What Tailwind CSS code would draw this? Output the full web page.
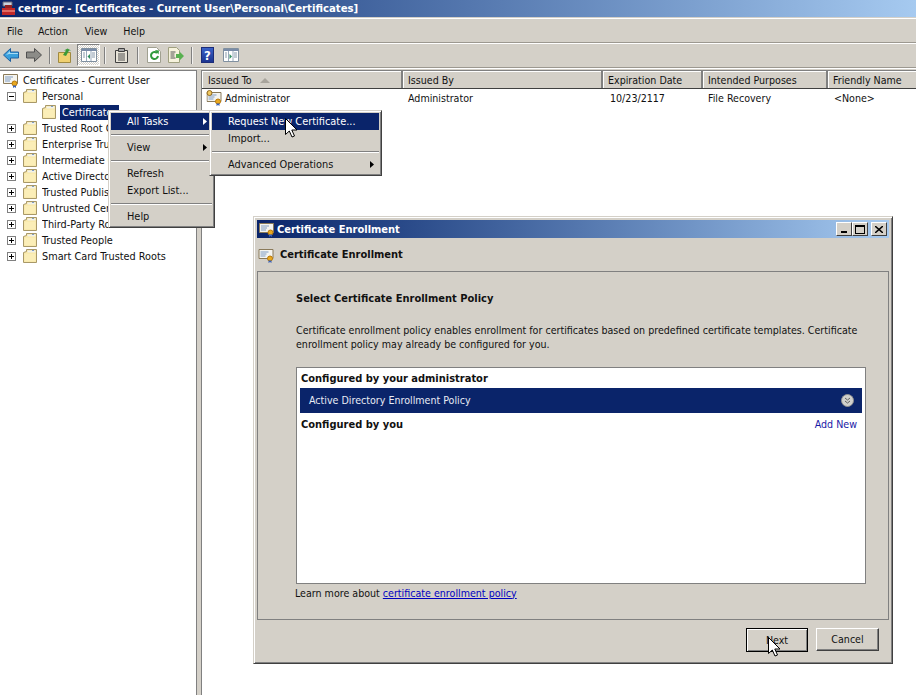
<!doctype html>
<html>
<head>
<meta charset="utf-8">
<script src="https://cdn.jsdelivr.net/npm/@tailwindcss/browser@4"></script>
</head>
<body class="m-0 overflow-hidden">
<svg width="0" height="0" class="absolute">
  <symbol id="folder" viewBox="0 0 14 14">
    <path d="M.5 3.500l3-1v-2h10v13H.5z" fill="#f8e6a4" stroke="#a89868"/>
    <path d="M4.500 1.500h8v2h-8z" fill="#f2f2ea"/>
    <path d="M9 1.500h2" stroke="#7f9cc4"/>
    <path d="M1.500 4.500h11v8h-11z" fill="#fbeeb8"/>
  </symbol>
  <symbol id="cert" viewBox="0 0 16 16">
    <path d="M.5 2.500h14v9h-14z" fill="#f4f4f0" stroke="#8a7a5a"/>
    <path d="M2 5h8M2 7h6M2 9h5" stroke="#7f9cc4"/>
    <circle cx="11.500" cy="11.500" r="2.500" fill="#e8a820" stroke="#b87808"/>
    <path d="M10 13.500v2.500l1.500-1 1.500 1v-2.500" fill="#3a62b8"/>
  </symbol>
  <symbol id="arrow" viewBox="0 0 13 20">
    <path d="M.5.500v16l3.800-3.500 2.700 6 2.500-1-2.700-6h5.200z" fill="#fff" stroke="#000"/>
  </symbol>
</svg>

<div class="w-[916px] h-[695px] relative flex flex-col bg-[#d4d0c8] text-[10.6px] text-[#111] font-['DejaVu_Sans_Condensed','Liberation_Sans',sans-serif] leading-none">

  <!-- title bar -->
  <div class="h-[17px] flex items-center gap-[3px] pl-[2px] bg-gradient-to-r from-[#0a246a] to-[#a6caf0] text-white font-bold text-[11.3px] shrink-0">
    <svg width="13" height="15" viewBox="0 0 13 15">
      <path d="M1 1h9v4H1z" fill="#c8d0dc" stroke="#667"/>
      <path d="M0 7h13v7H0z" fill="#c02828"/>
      <path d="M0 10h13" stroke="#ffb0a0"/>
      <path d="M3 4h7v3H3z" fill="#902020"/>
    </svg>
    <span>certmgr - [Certificates - Current User\Personal\Certificates]</span>
  </div>

  <!-- menu bar -->
  <div class="h-[25px] mt-[1px] pt-[1px] flex items-center border-t border-white border-b border-b-[#9c9890] shrink-0">
    <span class="ml-[7px]">File</span>
    <span class="ml-[15px]">Action</span>
    <span class="ml-[17px]">View</span>
    <span class="ml-[16px]">Help</span>
  </div>

  <!-- toolbar -->
  <div class="h-[25px] flex items-center pl-[3px] pb-[1px] border-t border-white border-b border-b-[#9c9890] shadow-[0_1px_0_#fff] shrink-0">
    <svg width="16" height="14" viewBox="0 0 16 14"><path d="M.5 7L7.500.5v3.500h8v6h-8v3.500z" fill="#3aa0dc" stroke="#2060a0"/><path d="M3 7l4-4v2h8v1H6z" fill="#a8dcf4"/></svg>
    <svg width="16" height="14" viewBox="0 0 16 14" class="ml-[7px]"><path d="M15.500 7L8.500.5v3.500h-8v6h8v3.500z" fill="#8c8c88" stroke="#505050"/></svg>
    <div class="w-[2px] h-[17px] ml-[7px] border-l border-[#808080] bg-white/70"></div>
    <svg width="15" height="15" viewBox="0 0 15 15" class="ml-[7px]">
      <path d="M.5 4.500h12v10H.5z" fill="#f0d070" stroke="#a08a40"/>
      <path d="M5 7L8 2.500h-2L9.500.5 13 2.500h-2L8 8z" fill="#3c9a38"/>
    </svg>
    <div class="w-[23px] h-[22px] ml-[4px] flex items-center justify-center border border-t-[#808080] border-l-[#808080] border-b-white border-r-white bg-[repeating-conic-gradient(#fff_0_25%,#d4d0c8_0_50%)] bg-[length:2px_2px]">
      <svg width="16" height="14" viewBox="0 0 16 14">
        <path d="M.5.500h15v13H.5z" fill="#fff" stroke="#8090a0"/>
        <path d="M1 1h14v2H1z" fill="#7a8ca8"/>
        <path d="M5.500 3v10M10 3v10" stroke="#9ab"/>
        <path d="M9 6v5L6.500 8.500z" fill="#2f8f5f"/>
        <path d="M2 5h2M2 7h2M2 9h2M11 5h3M11 7h3M11 9h3" stroke="#89a"/>
      </svg>
    </div>
    <div class="w-[2px] h-[17px] ml-[4px] border-l border-[#808080] bg-white/70"></div>
    <svg width="13" height="15" viewBox="0 0 13 15" class="ml-[9px]">
      <path d="M.5 2.500h12v12H.5z" fill="#e8e4d8" stroke="#404040"/>
      <path d="M3.500.5h6v3h-6z" fill="#a8a8a8" stroke="#404040"/>
      <path d="M3 6h7M3 8h7M3 10h7M3 12h7" stroke="#505050"/>
    </svg>
    <div class="w-[2px] h-[17px] ml-[9px] border-l border-[#808080] bg-white/70"></div>
    <svg width="14" height="16" viewBox="0 0 14 16" class="ml-[8px]">
      <path d="M.5.500h9l4 4v11H.5z" fill="#fff" stroke="#a0a090"/>
      <path d="M10 6a3.500 3.500 0 1 0 1 3" fill="none" stroke="#2f9a3c" stroke-width="2"/>
      <path d="M8 3l4 .5-.5 4z" fill="#2f9a3c"/>
    </svg>
    <svg width="16" height="16" viewBox="0 0 16 16" class="ml-[7px]">
      <path d="M.5.500h8l3 3v12H.5z" fill="#f6f2dc" stroke="#a0a080"/>
      <path d="M2.500 5h5M2.500 7h4M2.500 9h4M2.500 11h5" stroke="#555"/>
      <path d="M8 7h3.500V4.500L16 9l-4.500 4.500V11H8z" fill="#58b050"/>
    </svg>
    <div class="w-[2px] h-[17px] ml-[7px] border-l border-[#808080] bg-white/70"></div>
    <div class="w-[13px] h-[16px] ml-[8px] bg-gradient-to-b from-[#3a62c8] to-[#1c3490] border border-[#1c2c78] text-white font-bold text-[13px] flex items-center justify-center">?</div>
    <svg width="16" height="14" viewBox="0 0 16 14" class="ml-[9px]">
      <path d="M.5.500h15v13H.5z" fill="#fff" stroke="#8090a0"/>
      <path d="M1 1h14v2H1z" fill="#7a8ca8"/>
      <path d="M5.500 3v10M10 3v10" stroke="#9ab"/>
      <path d="M6.500 6v5L9 8.500z" fill="#2f8f5f"/>
      <path d="M2 5h2M2 7h2M2 9h2M11 5h3M11 7h3M11 9h3" stroke="#89a"/>
    </svg>
  </div>

  <!-- panes -->
  <div class="flex-1 flex pt-[2px] min-h-0">
    <!-- tree -->
    <div class="w-[197px] bg-white border-t border-t-[#808080] border-r border-r-[#808080] pt-[1px] pl-[1px] shrink-0 whitespace-nowrap text-[10.8px] [&>div>span:last-child]:mt-[2px] [&>div>div>span]:mt-[2px]">
      <div class="h-[16px] flex items-center pl-[2px]">
        <svg width="16" height="16" class="mr-[4px]"><use href="#cert"/></svg>
        <span>Certificates - Current User</span>
      </div>
      <div class="h-[16px] flex items-center pl-[6px]">
        <span class="w-[9px] h-[9px] border border-[#808080] relative shrink-0"><span class="absolute left-[1px] top-[3px] w-[5px] h-[1px] bg-black"></span></span>
        <svg width="14" height="14" class="ml-[7px] mr-[5px]"><use href="#folder"/></svg>
        <span>Personal</span>
      </div>
      <div class="h-[16px] flex items-center pl-[41px]">
        <svg width="14" height="14" class="mr-[4px]"><use href="#folder"/></svg>
        <div class="bg-[#0a246a] text-white h-[15px] w-[59px] px-[2px] flex items-center"><span class="w-[47px] overflow-hidden">Certificates</span></div>
      </div>
      <div class="h-[16px] flex items-center pl-[6px]"><span class="w-[9px] h-[9px] border border-[#808080] relative shrink-0"><span class="absolute left-[1px] top-[3px] w-[5px] h-[1px] bg-black"></span><span class="absolute left-[3px] top-[1px] w-[1px] h-[5px] bg-black"></span></span><svg width="14" height="14" class="ml-[7px] mr-[5px]"><use href="#folder"/></svg><span class="w-[66px] overflow-hidden">Trusted Root Certification Authorities</span></div>
      <div class="h-[16px] flex items-center pl-[6px]"><span class="w-[9px] h-[9px] border border-[#808080] relative shrink-0"><span class="absolute left-[1px] top-[3px] w-[5px] h-[1px] bg-black"></span><span class="absolute left-[3px] top-[1px] w-[1px] h-[5px] bg-black"></span></span><svg width="14" height="14" class="ml-[7px] mr-[5px]"><use href="#folder"/></svg><span class="w-[66px] overflow-hidden">Enterprise Trust</span></div>
      <div class="h-[16px] flex items-center pl-[6px]"><span class="w-[9px] h-[9px] border border-[#808080] relative shrink-0"><span class="absolute left-[1px] top-[3px] w-[5px] h-[1px] bg-black"></span><span class="absolute left-[3px] top-[1px] w-[1px] h-[5px] bg-black"></span></span><svg width="14" height="14" class="ml-[7px] mr-[5px]"><use href="#folder"/></svg><span class="w-[66px] overflow-hidden">Intermediate Certification Authorities</span></div>
      <div class="h-[16px] flex items-center pl-[6px]"><span class="w-[9px] h-[9px] border border-[#808080] relative shrink-0"><span class="absolute left-[1px] top-[3px] w-[5px] h-[1px] bg-black"></span><span class="absolute left-[3px] top-[1px] w-[1px] h-[5px] bg-black"></span></span><svg width="14" height="14" class="ml-[7px] mr-[5px]"><use href="#folder"/></svg><span class="w-[66px] overflow-hidden">Active Directory User Object</span></div>
      <div class="h-[16px] flex items-center pl-[6px]"><span class="w-[9px] h-[9px] border border-[#808080] relative shrink-0"><span class="absolute left-[1px] top-[3px] w-[5px] h-[1px] bg-black"></span><span class="absolute left-[3px] top-[1px] w-[1px] h-[5px] bg-black"></span></span><svg width="14" height="14" class="ml-[7px] mr-[5px]"><use href="#folder"/></svg><span class="w-[66px] overflow-hidden">Trusted Publishers</span></div>
      <div class="h-[16px] flex items-center pl-[6px]"><span class="w-[9px] h-[9px] border border-[#808080] relative shrink-0"><span class="absolute left-[1px] top-[3px] w-[5px] h-[1px] bg-black"></span><span class="absolute left-[3px] top-[1px] w-[1px] h-[5px] bg-black"></span></span><svg width="14" height="14" class="ml-[7px] mr-[5px]"><use href="#folder"/></svg><span class="w-[66px] overflow-hidden">Untrusted Certificates</span></div>
      <div class="h-[16px] flex items-center pl-[6px]"><span class="w-[9px] h-[9px] border border-[#808080] relative shrink-0"><span class="absolute left-[1px] top-[3px] w-[5px] h-[1px] bg-black"></span><span class="absolute left-[3px] top-[1px] w-[1px] h-[5px] bg-black"></span></span><svg width="14" height="14" class="ml-[7px] mr-[5px]"><use href="#folder"/></svg><span class="w-[66px] overflow-hidden">Third-Party Root Certification Authorities</span></div>
      <div class="h-[16px] flex items-center pl-[6px]"><span class="w-[9px] h-[9px] border border-[#808080] relative shrink-0"><span class="absolute left-[1px] top-[3px] w-[5px] h-[1px] bg-black"></span><span class="absolute left-[3px] top-[1px] w-[1px] h-[5px] bg-black"></span></span><svg width="14" height="14" class="ml-[7px] mr-[5px]"><use href="#folder"/></svg><span>Trusted People</span></div>
      <div class="h-[16px] flex items-center pl-[6px]"><span class="w-[9px] h-[9px] border border-[#808080] relative shrink-0"><span class="absolute left-[1px] top-[3px] w-[5px] h-[1px] bg-black"></span><span class="absolute left-[3px] top-[1px] w-[1px] h-[5px] bg-black"></span></span><svg width="14" height="14" class="ml-[7px] mr-[5px]"><use href="#folder"/></svg><span>Smart Card Trusted Roots</span></div>
    </div>

    <!-- list -->
    <div class="flex-1 ml-[4px] bg-white border-t border-l border-[#808080] min-w-0">
      <div class="h-[18px] flex bg-[#d4d0c8] border-b border-[#404040]">
        <div class="w-[201px] pl-[6px] pt-[2px] flex items-center border-r-2 border-r-[#808080] shadow-[inset_1px_1px_0_#fff]">Issued To<svg width="10" height="5" viewBox="0 0 10 5" class="ml-[8px]"><path d="M5 0l5 5H0z" fill="#a8a49c"/></svg></div>
        <div class="w-[200px] pl-[5px] pt-[2px] flex items-center border-r-2 border-r-[#808080] shadow-[inset_1px_1px_0_#fff]">Issued By</div>
        <div class="w-[100px] pl-[5px] pt-[2px] flex items-center border-r-2 border-r-[#808080] shadow-[inset_1px_1px_0_#fff]">Expiration Date</div>
        <div class="w-[125px] pl-[5px] pt-[2px] flex items-center border-r-2 border-r-[#808080] shadow-[inset_1px_1px_0_#fff]">Intended Purposes</div>
        <div class="flex-1 pl-[5px] pt-[2px] flex items-center shadow-[inset_1px_1px_0_#fff]">Friendly Name</div>
      </div>
      <div class="h-[18px] flex items-center">
        <div class="w-[201px] pl-[4px] flex items-center">
          <svg width="17" height="16" viewBox="0 0 16 16" class="-mt-[1px] mr-[2px] shrink-0"><use href="#cert"/><circle cx="3" cy="3" r="2.500" fill="#f0c860" stroke="#906820"/></svg>Administrator
        </div>
        <div class="w-[200px] pl-[5px]">Administrator</div>
        <div class="w-[100px] pl-[7px]">10/23/2117</div>
        <div class="w-[125px] pl-[5px]">File Recovery</div>
        <div class="flex-1 pl-[6px]">&lt;None&gt;</div>
      </div>
    </div>
  </div>

  <!-- context menu -->
  <div class="absolute left-[108px] top-[110px] w-[107px] h-[118px] p-[2px] text-[10.9px] leading-[12px] bg-[#d4d0c8] border border-t-[#d4d0c8] border-l-[#d4d0c8] border-r-[#404040] border-b-[#404040] shadow-[inset_1px_1px_0_#fff,inset_-1px_-1px_0_#808080]">
    <div class="h-[17px] flex items-center pl-[16px] pr-[5px] justify-between bg-[#0a246a] text-white">All Tasks<svg width="4" height="7" viewBox="0 0 4 7"><path d="M0 0l4 3.500L0 7z" fill="#fff"/></svg></div>
    <div class="h-[9px] flex items-center"><div class="w-full h-[2px] border-t border-[#808080] border-b border-b-white"></div></div>
    <div class="h-[17px] flex items-center pl-[16px] pr-[5px] justify-between">View<svg width="4" height="7" viewBox="0 0 4 7"><path d="M0 0l4 3.500L0 7z" fill="#000"/></svg></div>
    <div class="h-[9px] flex items-center"><div class="w-full h-[2px] border-t border-[#808080] border-b border-b-white"></div></div>
    <div class="h-[17px] flex items-center pl-[16px]">Refresh</div>
    <div class="h-[17px] flex items-center pl-[16px]">Export List...</div>
    <div class="h-[9px] flex items-center"><div class="w-full h-[2px] border-t border-[#808080] border-b border-b-white"></div></div>
    <div class="h-[17px] flex items-center pl-[16px]">Help</div>
  </div>

  <!-- submenu -->
  <div class="absolute left-[209px] top-[110px] w-[173px] h-[66px] p-[2px] text-[10.9px] leading-[12px] bg-[#d4d0c8] border border-t-[#d4d0c8] border-l-[#d4d0c8] border-r-[#404040] border-b-[#404040] shadow-[inset_1px_1px_0_#fff,inset_-1px_-1px_0_#808080]">
    <div class="h-[17px] flex items-center pl-[16px] bg-[#0a246a] text-white">Request New Certificate...</div>
    <div class="h-[17px] flex items-center pl-[16px]">Import...</div>
    <div class="h-[9px] flex items-center"><div class="w-full h-[2px] border-t border-[#808080] border-b border-b-white"></div></div>
    <div class="h-[17px] flex items-center pl-[16px] pr-[5px] justify-between">Advanced Operations<svg width="4" height="7" viewBox="0 0 4 7"><path d="M0 0l4 3.500L0 7z" fill="#000"/></svg></div>
  </div>
  <svg width="13" height="20" class="absolute left-[285px] top-[118px]"><use href="#arrow"/></svg>

  <!-- enrollment dialog -->
  <div class="absolute left-[253px] top-[216px] w-[640px] h-[448px] flex flex-col p-[3px] bg-[#d4d0c8] border border-t-[#d4d0c8] border-l-[#d4d0c8] border-r-[#404040] border-b-[#404040] shadow-[inset_1px_1px_0_#fff,inset_-1px_-1px_0_#808080]">
    <div class="h-[18px] flex items-center pl-[2px] pr-[2px] gap-[2px] bg-gradient-to-r from-[#0a246a] to-[#a6caf0] text-white font-bold text-[11px] shrink-0">
      <svg width="16" height="16"><use href="#cert"/></svg>
      <span class="flex-1">Certificate Enrollment</span>
      <div class="w-[16px] h-[14px] flex items-end pl-[4px] pb-[2px] bg-[#d4d0c8] border border-t-white border-l-white border-r-[#404040] border-b-[#404040]"><span class="w-[6px] h-[2px] bg-black"></span></div>
      <div class="w-[16px] h-[14px] -ml-[2px] flex items-center justify-center bg-[#d4d0c8] border border-t-white border-l-white border-r-[#404040] border-b-[#404040]"><span class="w-[10px] h-[9px] border border-black border-t-2"></span></div>
      <div class="w-[16px] h-[14px] ml-[1px] flex items-center justify-center bg-[#d4d0c8] border border-t-white border-l-white border-r-[#404040] border-b-[#404040]"><svg width="8" height="7" viewBox="0 0 8 7"><path d="M0 0l8 7M8 0L0 7" stroke="#000" stroke-width="1.500"/></svg></div>
    </div>
    <div class="h-[33px] flex items-center pl-[1px] gap-[5px] font-bold text-[11px] shrink-0">
      <svg width="17" height="16"><use href="#cert"/></svg>
      <span>Certificate Enrollment</span>
    </div>
    <div class="h-[349px] border border-[#808080] flex flex-col pl-[38px] pr-[22px] shrink-0">
      <div class="font-bold text-[11px] mt-[19px] h-[14px] flex items-center">Select Certificate Enrollment Policy</div>
      <p class="mt-[18px] leading-[14px] w-[570px]">Certificate enrollment policy enables enrollment for certificates based on predefined certificate templates. Certificate enrollment policy may already be configured for you.</p>
      <div class="mt-[16px] h-[217px] bg-white border border-[#808080] px-[3px] shrink-0">
        <div class="font-bold text-[11px] h-[20px] pl-[1px] pt-[1px] flex items-center">Configured by your administrator</div>
        <div class="h-[25px] bg-[#0a246a] text-[#e8ebf4] flex items-center pl-[9px] pr-[8px] pb-[1px] justify-between">
          Active Directory Enrollment Policy
          <svg width="13" height="13" viewBox="0 0 13 13"><circle cx="6.500" cy="6.500" r="6" fill="#d0d0cc" stroke="#909090"/><path d="M4 4l2.500 2L9 4M4 7l2.500 2L9 7" fill="none" stroke="#606060"/></svg>
        </div>
        <div class="h-[22px] flex items-center justify-between pl-[1px] pr-[5px]"><span class="font-bold text-[11px]">Configured by you</span><span class="text-[#1a1aa6]">Add New</span></div>
      </div>
      <div class="mt-[2px] h-[14px] flex items-center whitespace-pre -ml-[1px]">Learn more about <span class="text-[#0000c0] underline">certificate enrollment policy</span></div>
    </div>
    <div class="flex-1 flex justify-end items-start pt-[8px] pr-[10px] gap-[8px]">
      <div class="w-[62px] h-[24px] flex items-center justify-center bg-[#d4d0c8] border border-black shadow-[inset_1px_1px_0_#fff,inset_-1px_-1px_0_#808080]">Next</div>
      <div class="w-[63px] h-[23px] flex items-center justify-center bg-[#d4d0c8] border border-t-white border-l-white border-r-[#404040] border-b-[#404040] shadow-[inset_-1px_-1px_0_#808080]">Cancel</div>
    </div>
  </div>
  <svg width="13" height="20" class="absolute left-[768px] top-[637px]"><use href="#arrow"/></svg>
</div>
</body>
</html>
